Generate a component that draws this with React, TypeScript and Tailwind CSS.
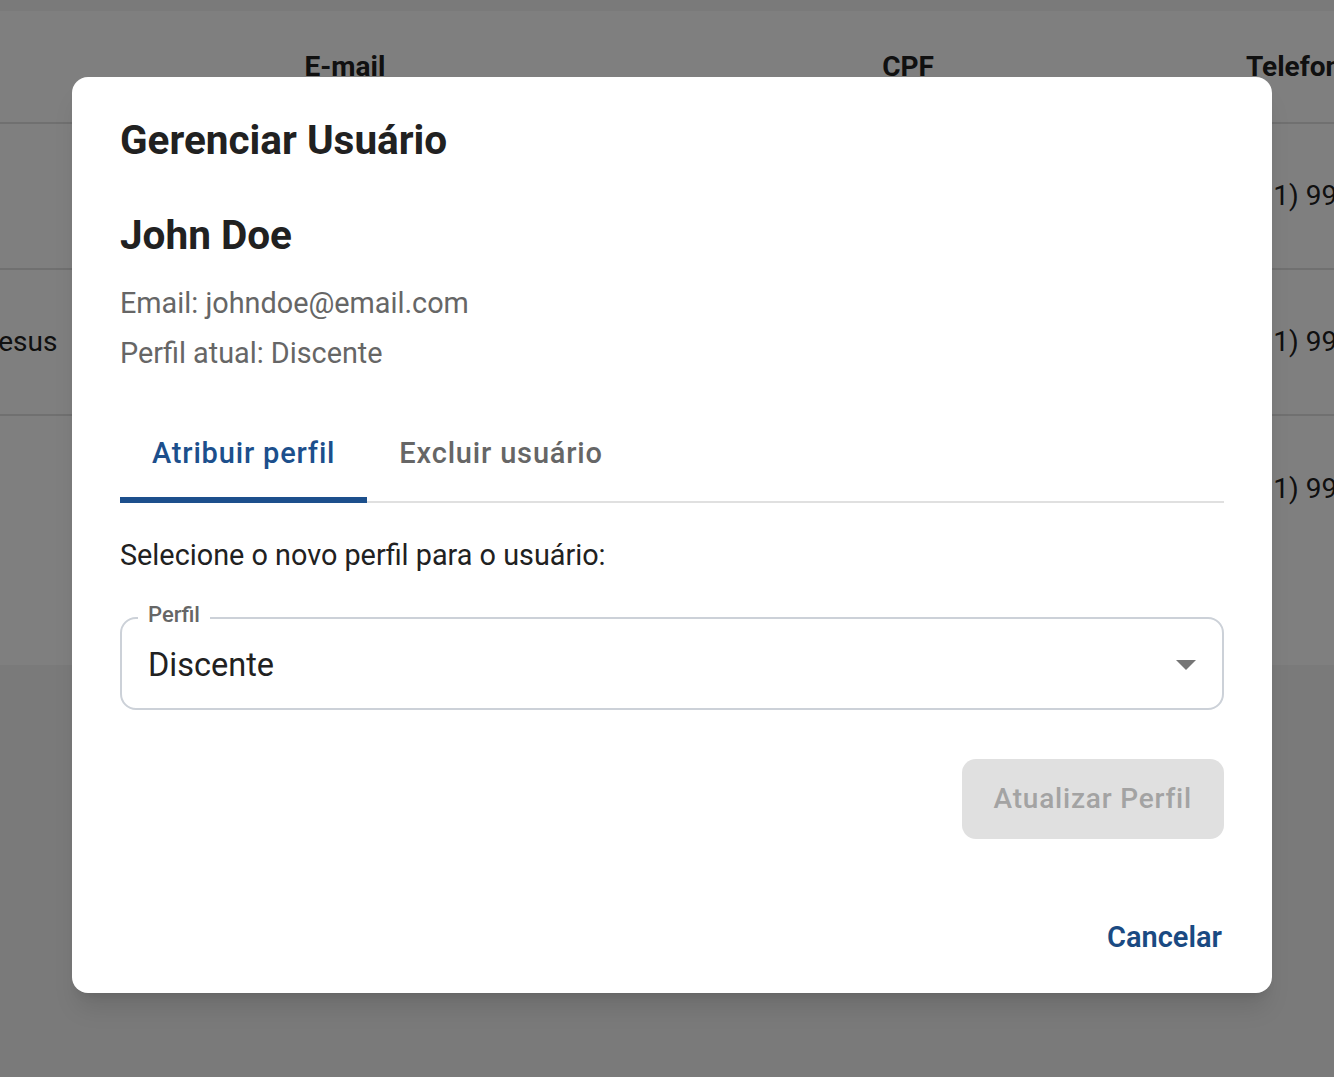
import { useState } from 'react';

const rows = [
  { name: 'John Doe', email: 'johndoe@email.com', cpf: '123.456.789-00', phone: '(11) 99999-9999' },
  { name: 'Maria de Jesus', email: 'maria@email.com', cpf: '987.654.321-00', phone: '(11) 99888-7777' },
  { name: 'Ana Lima', email: 'ana@email.com', cpf: '111.222.333-44', phone: '(11) 99777-6666' },
];

function UsersTable() {
  return (
    <div className="pt-[11px]">
      <div className="h-[654px] bg-white text-[28px] text-[#212121]">
        {/* Header */}
        <div className="flex h-[113px] items-center border-b-2 border-[#e0e0e0] font-bold">
          <div className="w-[72px] shrink-0" />
          <div className="w-[546px] shrink-0 text-center">E-mail</div>
          <div className="w-[580px] shrink-0 text-center">CPF</div>
          <div className="flex-1 overflow-hidden whitespace-nowrap pl-[48px]">Telefone</div>
        </div>
        {rows.map((row, i) => (
          <div
            key={row.email}
            className={`flex h-[146px] items-center ${i < rows.length - 1 ? 'border-b-2 border-[#e0e0e0]' : ''}`}
          >
            <div className="w-[72px] shrink-0 overflow-hidden whitespace-nowrap">
              <span className="ml-[-133px]">{row.name}</span>
            </div>
            <div className="w-[546px] shrink-0 text-center">{row.email}</div>
            <div className="w-[580px] shrink-0 text-center">{row.cpf}</div>
            <div className="flex-1 overflow-hidden whitespace-nowrap pl-[50px]">{row.phone}</div>
          </div>
        ))}
      </div>
    </div>
  );
}

export default function App() {
  const [tab, setTab] = useState(0);
  const [perfil] = useState('Discente');

  return (
    <div className="relative h-[1077px] overflow-hidden bg-[#f4f4f4] font-['Roboto','Liberation_Sans',sans-serif]">
      <UsersTable />

      {/* Backdrop */}
      <div className="absolute inset-0 bg-black/50" />

      {/* Dialog */}
      <div className="absolute left-[72px] top-[77px] flex h-[916px] w-[1200px] flex-col rounded-[16px] bg-white px-[48px] pt-[39px] shadow-xl">
        <h2 className="h-[48px] text-[40.5px] leading-[48px] font-bold text-[#212121]">Gerenciar Usuário</h2>

        <h3 className="mt-[47px] h-[48px] text-[40.5px] leading-[48px] font-bold text-[#212121]">John Doe</h3>

        <p className="mt-[19px] text-[28.8px] leading-[50px] text-[#666666]">Email: johndoe@email.com</p>
        <p className="text-[28.8px] leading-[50px] text-[#666666]">Perfil atual: Discente</p>

        {/* Tabs */}
        <div className="mt-[25px] flex border-b-2 border-[#e0e0e0]">
          {['Atribuir perfil', 'Excluir usuário'].map((label, i) => (
            <button
              key={label}
              type="button"
              onClick={() => setTab(i)}
              className={`relative flex h-[98px] items-center px-[32px] pt-[4px] text-[29px] font-medium tracking-[0.02857em] ${
                tab === i ? 'text-[#1c4f8c]' : 'text-[#666666]'
              }`}
            >
              {label}
              {tab === i && <span className="absolute bottom-[-2px] left-0 h-[6px] w-full bg-[#1c4f8c]" />}
            </button>
          ))}
        </div>

        <p className="mt-[27px] text-[28.8px] leading-[50px] text-[#212121]">Selecione o novo perfil para o usuário:</p>

        {/* Select */}
        <div className="relative mt-[37px] flex h-[93px] items-center rounded-[16px] border-2 border-[#ccd1d8] pl-[26px] pr-[12px] pt-[4px]">
          <span className="absolute left-[16px] top-[-18px] bg-white px-[10px] text-[22px] leading-[28px] font-medium text-[#666666]">
            Perfil
          </span>
          <span className="flex-1 text-[32.5px] text-[#212121]">{perfil}</span>
          <svg viewBox="0 0 24 24" className="-mt-[4px] h-[48px] w-[48px] fill-[#757575]">
            <path d="M7 10l5 5 5-5z" />
          </svg>
        </div>

        <div className="mt-[49px] flex justify-end">
          <button
            type="button"
            disabled
            className="flex h-[80px] items-center rounded-[14px] bg-[#e0e0e0] px-[32px] text-[28px] font-medium tracking-[0.02857em] text-[#a3a3a3]"
          >
            Atualizar Perfil
          </button>
        </div>

        <div className="mt-[73px] flex justify-end pr-[2px]">
          <button type="button" className="text-[29px] leading-[50px] font-semibold text-[#1a4a82]">
            Cancelar
          </button>
        </div>
      </div>
    </div>
  );
}
